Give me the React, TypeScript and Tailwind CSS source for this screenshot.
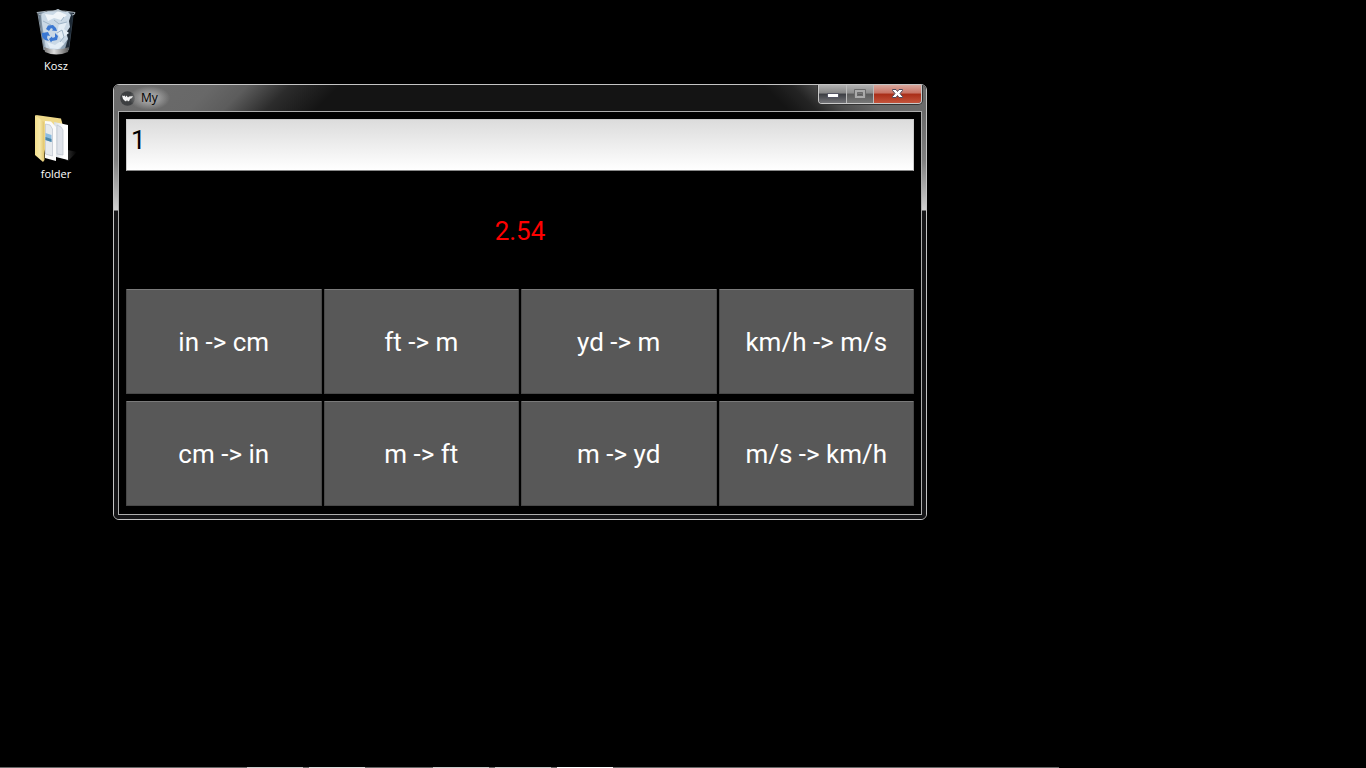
import { useState } from "react";

const conversions = [
  { label: "in -> cm", factor: 2.54 },
  { label: "ft -> m", factor: 0.3048 },
  { label: "yd -> m", factor: 0.9144 },
  { label: "km/h -> m/s", factor: 1 / 3.6 },
  { label: "cm -> in", factor: 1 / 2.54 },
  { label: "m -> ft", factor: 1 / 0.3048 },
  { label: "m -> yd", factor: 1 / 0.9144 },
  { label: "m/s -> km/h", factor: 3.6 },
];

function BinIcon() {
  return (
    <svg width="40" height="48" viewBox="0 0 40 48" aria-hidden="true">
      <defs>
        <linearGradient id="binGlass" x1="0" x2="1">
          <stop offset="0" stopColor="#5c6f80" />
          <stop offset="0.2" stopColor="#a4b6c6" />
          <stop offset="0.75" stopColor="#8fa3b5" />
          <stop offset="1" stopColor="#1b2733" />
        </linearGradient>
        <linearGradient id="binBase" x1="0" x2="1">
          <stop offset="0" stopColor="#777" />
          <stop offset="0.4" stopColor="#ddd" />
          <stop offset="1" stopColor="#555" />
        </linearGradient>
      </defs>
      <path d="M2 4 L38 4 L33 42 Q20 46 8 42 Z" fill="url(#binGlass)" />
      <path d="M31 8 L37 7 L33 40 L29 41 L32 31 L30 22 Z" fill="#1e2a36" />
      <path d="M5 6 L12 3 L17 3 L22 1 L26 3 L32 4 L35 7 L33 13 L34 19 L30 25 L32 31 L28 36 L24 41 L17 42 L10 40 L8 28 L6 16 Z" fill="#cad9e6" />
      <path d="M9 6 L17 7 L22 3 L31 7 L25 12 L18 10 L12 13 Z" fill="#f0f5f9" />
      <path d="M23 16 L31 14 L28 21 L33 25 L25 31 L21 25 Z M11 34 L19 37 L25 33 L28 36 L22 41 L14 40 Z" fill="#e4eef6" />
      <path d="M18 12 L23 16 L31 14 M21 25 L26 22 L28 29 L24 34 M7 13 L15 17 M28 9 L25 13" fill="none" stroke="#9fb5c8" />
      <g fill="#3b78d2">
        <path d="M10 21 L12 17.500 L17 17 L20 20 L21 23 L16 22.500 L17 21 L15 20 L13 23 Z" />
        <path d="M6 25 L12 24 L14 28 L11.500 27.500 L11 30 L13 33 L9 32 L6 29 Z" />
        <path d="M19 25 L22 28 L21 32 L16 33 L15 34.500 L13 31 L16 28.500 L16.500 30 L19 29 Z" />
      </g>
      <path d="M8 39 Q20 44 33 39 L32 44 Q20 49 9 44 Z" fill="url(#binBase)" />
      <path d="M1 4.500 Q20 1 39 4.500 Q39 7 36 7 M1 4.500 Q2 7 6 7" fill="none" stroke="#a9b3bb" />
      <path d="M2 6 L8 42" stroke="#84919c" />
    </svg>
  );
}

function FolderIcon() {
  return (
    <svg width="44" height="50" viewBox="0 0 44 50" aria-hidden="true">
      <defs>
        <linearGradient id="folderFront" x1="0" x2="1">
          <stop offset="0" stopColor="#f4e08d" />
          <stop offset="0.5" stopColor="#f7e9a8" />
          <stop offset="1" stopColor="#dfc269" />
        </linearGradient>
        <linearGradient id="paper" x1="0" x2="1">
          <stop offset="0" stopColor="#d5dce3" />
          <stop offset="0.7" stopColor="#fff" />
        </linearGradient>
        <linearGradient id="folderShade" x1="0" x2="1">
          <stop offset="0" stopColor="#333" />
          <stop offset="1" stopColor="#000" />
        </linearGradient>
      </defs>
      <path d="M32 46 L34 36 L43 38 L34 47 Z" fill="url(#folderShade)" />
      <path d="M2 1 L27 4.500 L29 12 L12 44 Z" fill="#efd98a" />
      <path d="M20 8 L34 11 L34 46 L22 43 Z" fill="url(#paper)" />
      <path d="M23 11 L27 13 L29 16 L29 41 L23 40 Z" fill="#dfe3ea" stroke="#bcc3cd" strokeWidth="0.7" />
      <path d="M11 7 L17 7.500 L22 13 L22 47 L11 44 Z" fill="#fafafa" />
      <path d="M11.500 10 L16 11 L18.500 15 L18.500 42 L11.500 40 Z" fill="#e6eaee" stroke="#bcc3cd" strokeWidth="0.7" />
      <path d="M11.500 19 L17.500 21 L17.500 28 L11.500 26 Z" fill="#8bbce0" />
      <path d="M11.500 23 L17.500 25 L17.500 28 L11.500 26 Z" fill="#4d86a8" />
      <path d="M1 1 L10 8 L10.500 46 L9 48 L1 41 Z" fill="url(#folderFront)" />
    </svg>
  );
}

function AppIcon() {
  return (
    <svg width="15" height="15" viewBox="0 0 15 15" aria-hidden="true">
      <circle cx="7.5" cy="7.5" r="7.3" fill="#3d3f41" />
      <path d="M2 4.500 L3.500 5 L4.500 4.500 L5.500 6 L6.500 4.500 L8 6.500 L9 5.500 L13 5 L12 7 L10 8 L9.500 9.500 L8 10.500 L7 9 L6 10.500 L4.500 9.500 L3 8 Z" fill="#f4f4f4" />
    </svg>
  );
}

export default function App() {
  const [value, setValue] = useState("1");
  const [result, setResult] = useState("2.54");

  const convert = (factor: number) => {
    const amount = Number(value);
    setResult(Number.isNaN(amount) ? "0" : String(Number((amount * factor).toFixed(4))));
  };

  return (
    <div className="relative flex min-h-screen flex-col justify-between overflow-hidden bg-black font-['Open_Sans','Noto_Sans',sans-serif]">
      <nav aria-label="Desktop" className="flex w-28 flex-col gap-10 pt-2">
        <a href="#kosz" className="flex flex-col items-center gap-0.5 text-[11px] leading-4 text-white">
          <BinIcon />
          Kosz
        </a>
        <a href="#folder" className="flex flex-col items-center gap-0.5 text-[11px] leading-4 text-white">
          <FolderIcon />
          folder
        </a>
      </nav>

      <main className="absolute top-[84px] left-[113px] w-[814px] overflow-hidden rounded-md border border-[#c4c4c4] bg-[#151517]">
        <header className="flex h-[26px] items-start justify-between bg-[#141414] bg-[linear-gradient(135deg,#6c6c6c_0,#686868_70px,#5c5c5c_95px,#2c2c2c_125px,transparent_160px),linear-gradient(225deg,#6c6c6c_0,#686868_50px,#4c4c4c_75px,#242424_95px,transparent_115px)] pr-1 pl-1.5">
          <div className="flex h-[26px] items-center gap-1.5">
            <AppIcon />
            <h1 className="-ml-3 bg-[radial-gradient(closest-side,#a8a8a8,#9c9c9c_40%,transparent)] pr-3 pl-3 text-xs leading-6 text-black">My</h1>
          </div>
          <div className="flex h-[19px] overflow-hidden rounded-b border border-t-0 border-[#c9c9c9] shadow-[0_0_0_1px_#333]">
            <button aria-label="Minimize" className="flex w-7 items-center justify-center border-r border-[#bbb] bg-[linear-gradient(#b0b0b0,#868686_45%,#3b3d42_50%,#747478)]">
              <svg width="12" height="12" viewBox="0 0 12 12"><rect x="0.5" y="5.5" width="11" height="4" fill="#fff" stroke="#555563" /></svg>
            </button>
            <button aria-label="Maximize" className="flex w-[27px] items-center justify-center border-r border-[#bbb] bg-[linear-gradient(#b0b0b0,#8c8c8c_45%,#5a5a5a_50%,#787878)]">
              <svg width="12" height="12" viewBox="0 0 12 12"><rect x="2" y="3" width="8" height="6" fill="none" stroke="#aaa" strokeWidth="2" /><path d="M.5 1.500h11v9H.5zM3.500 4.500h5v3h-5z" fill="none" stroke="#6a6a6a" /></svg>
            </button>
            <button aria-label="Close" className="flex w-[47px] items-center justify-center bg-[linear-gradient(#d8a79d,#c87364_45%,#a92d17_50%,#c4543c)]">
              <svg width="13" height="12" viewBox="0 0 13 12"><path d="M1.500 1.500h3.500l1.500 2 1.500-2h3.500v1L9 5.500l2.500 3v1H8l-1.500-2-1.500 2H1.500v-1l2.500-3-2.500-3z" fill="#fff" stroke="#4d4a5c" /></svg>
            </button>
          </div>
        </header>

        <div className="bg-[linear-gradient(#696969,#808080_50px,#d0d0d0_99px,#151517_100px)] px-1 pb-1">
          <div className="border border-[#adadad] bg-black px-[7px] pt-[7px] pb-2">
            <input
              aria-label="Value"
              value={value}
              onChange={(event) => setValue(event.target.value)}
              className="block h-[52px] w-full border border-[#ccc] border-b-[#888] bg-[linear-gradient(#dcdcdc,#fff)] px-1 pb-2.5 font-[Roboto,sans-serif] text-[26px] text-black outline-none"
            />
            <output className="flex h-[118px] items-center justify-center pt-0.5 font-[Roboto,sans-serif] text-[26px] text-[#f00]">{result}</output>
            <div className="grid grid-cols-4 gap-x-0.5 gap-y-[7px]">
              {conversions.map(({ label, factor }) => (
                <button
                  key={label}
                  onClick={() => convert(factor)}
                  className="h-[105px] rounded-[1px] border border-[#484848] border-t-[#7a7a7a] bg-[#585858] pt-0.5 font-[Roboto,sans-serif] text-[26px] text-white"
                >
                  {label}
                </button>
              ))}
            </div>
          </div>
        </div>
      </main>

      <footer aria-label="Taskbar" className="flex h-px w-[1059px] gap-1.5 bg-[#686868] pl-[247px]">
        <span className="w-14 bg-[#ccc]" />
        <span className="mr-[62px] w-14 bg-[#ddd]" />
        <span className="w-14 bg-[#ccc]" />
        <span className="w-14 bg-[#ccc]" />
        <span className="w-14 bg-white" />
      </footer>
    </div>
  );
}
